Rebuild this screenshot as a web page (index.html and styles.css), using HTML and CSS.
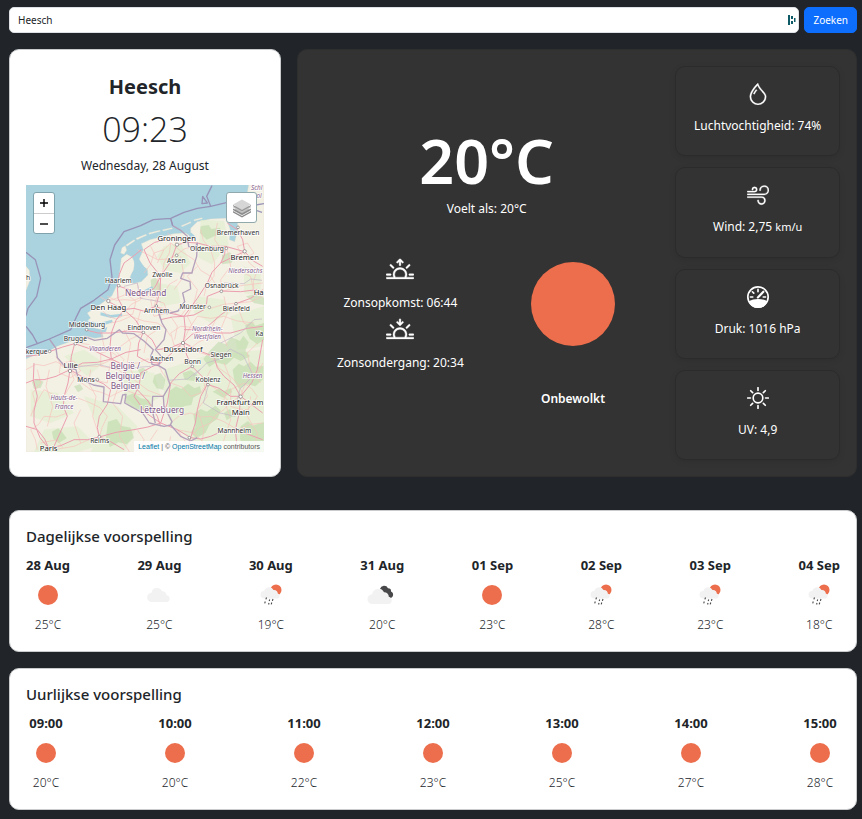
FILE: index.html
```html
<!DOCTYPE html>
<html lang="nl">
<head>
<meta charset="utf-8">
<meta name="viewport" content="width=device-width, initial-scale=1">
<title>Weer in Heesch</title>
<link rel="stylesheet" href="styles.css">
</head>
<body>
<svg class="sprite" aria-hidden="true">
  <symbol id="clear" viewBox="0 0 32 32"><circle cx="16" cy="16" r="10" fill="#ec6e4c"/></symbol>
  <symbol id="cloud" viewBox="0 0 32 32"><path fill="#f2f2f2" d="M9 23a4.600 4.600 0 0 1-.5-9.200A5.500 5.500 0 0 1 19 12.300a4 4 0 0 1 4.500 4A3.400 3.400 0 0 1 24 23z"/></symbol>
  <symbol id="rain" viewBox="0 0 32 32">
    <circle cx="21" cy="11" r="5.500" fill="#ec6e4c"/>
    <path fill="#f2f2f2" d="M9 19.500a3.700 3.700 0 0 1 .4-7.400A4.800 4.800 0 0 1 18.500 11a4 4 0 0 1 4.300 3.600A2.600 2.600 0 0 1 23 19.500z"/>
    <path stroke="#48484a" stroke-width="1.100" d="M11.500 18.500l-.6 1.800M10.300 22.500l-.6 1.800M14.700 20.500l-.5 1.500M14 24l-.4 1.500M18 20l-.6 1.800M16.800 23.500l-.6 1.800"/>
  </symbol>
  <symbol id="broken" viewBox="0 0 32 32">
    <path fill="#48484a" d="M14 10a4.300 4.300 0 0 1 8-.8 3 3 0 0 1 3 3.300 3.500 3.500 0 1 1-3.500 6z"/>
    <path fill="#f2f2f2" d="M6.500 25a4.900 4.900 0 0 1-.3-9.800A6.300 6.300 0 0 1 18 13.200a4.500 4.500 0 0 1 4.800 4.600A3.700 3.700 0 0 1 23 25z"/>
  </symbol>
</svg>

<main class="page">
  <form class="search">
    <div class="search-box">
      <input class="search-input" type="text" value="Heesch" aria-label="Plaats">
      <svg class="search-mark" viewBox="0 0 8 10" aria-hidden="true"><path fill="#0e5a66" d="M0 0h2v10H0zM3 1h2v3H3zM3 6h2v3H3zM6 3h1.500v4H6z"/></svg>
    </div>
    <button class="search-button" type="submit">Zoeken</button>
  </form>

  <div class="overview">
    <section class="card place">
      <h1 class="place-name">Heesch</h1>
      <p class="clock">09:23</p>
      <p class="date">Wednesday, 28 August</p>
      <div class="map">
        <svg class="map-canvas" viewBox="6 6 714 801" preserveAspectRatio="xMidYMid slice" role="img" aria-label="Kaart">
          <rect x="6" y="6" width="714" height="801" fill="#aad3df"/>
          <path class="land" d="M6 528L40 512 76 504 100 490 150 472 180 458 212 466 238 462 232 440 200 432 182 420 200 405 190 390 218 372 246 352 264 338 282 300 288 262 292 226 308 214 324 222 332 240 328 262 318 282 326 302 352 296 372 276 370 258 354 248 346 228 358 200 352 182 378 170 420 160 450 152 484 150 500 160 500 136 520 116 560 108 606 106 618 138 616 170 632 176 642 140 640 110 690 96 692 60 670 30 674 6H720V807H6z"/>
          <path class="land" d="M6 250L16 262 18 292 10 312 6 322zM290 210l4-16 10-6 4 14-8 12zM306 186l24-16 3 3-24 17zM336 166l30-12 2 3-29 13zM374 150l34-8 1 3-33 9zM416 140l28-6 1 3-28 7zM472 128l28-12 1 3-27 12zM510 110l24-6 1 3-24 7z"/>
          <path class="meadow" d="M420 190l50-10 30 60-30 30-50-10-20-40zM20 620l80 10 50 60-70 30-60-20zM520 340l80 10 20 40-60 30-50-30zM120 520l60-20 60 40-50 40zM660 250l50 20v70l-50-10zM530 110l70 4 14 70-50 60-40-20zM60 740l100-10 60 60-60 17H30zM180 640l100 30 60 60-40 77H200l30-60zM420 560l120-40 180-20v307H560l-120-80-20-90zM300 560l90 10 20 70-60 40-50-40zM400 300l60 10 10 50-60 10zM620 400l100-30v120l-80 10z"/>
          <path class="forest" d="M560 500l24-24 20 8 18-22 26 12 10-16 16 20-10 26 14 16-28 14-20-10-24 22-30-8-20 14-18-24zM436 624l20-14 16 8 20-16 20 14 16-6 4 20-24 14-6 22-22 4-14 18-20 6-12-24zM508 694l22-16 18 8 26-18 16 14-10 26-22 14-14 28-28 16-16-18 14-16zM306 640l24-10 20 16 24 4 16 26-14 12-30-8-24-6-18-16zM626 560l18-18 16 8 20-14 16 16 22-4v40l-24 22-26-6-22 14-14-22zM650 730l22-16 14 14 34-10v89h-60l-12-40zM252 716l26-8 14 20 28 6 10 30-22 20-24-6-26 14-12-30zM566 626l20-10 14 8 20-8 4 12-26 16zM530 130l24-4 8 12 26-4 6 20-24 6-22 10-20-20zM594 216l24-8 14 16-10 16-28 4zM392 576l18-6 14 20-6 30-20-4-12-20zM664 426l20-10 10 12 26-8v50l-20 14-22-16-10-20zM84 746l18-10 12 10 14 20-24 14-16-12zM24 596l16-8 18 8-8 18-20 4zM380 290l14-6 12 14 6 28-16 8-14-16zM666 340l30-6 24 10v22l-30-6zM476 570l24-8 20 14-10 18-28-4zM150 610l18-6 10 14-16 10zM600 690l18-12 8 22-18 12zM340 560l18-6 14 12-18 12z"/>
          <path class="water" d="M330 228l18 6 22 30-14 26-30 10-4-26 10-16zM186 412l40 8 38-10 2 8-36 12-40-2zM176 430l50 10 24-8-4 14-34 6zM230 388l30 8 34-4 1 7-34 6-32-8zM500 148l12 10-6 14-12-12zM360 322l24-12 4 6-22 14z"/>
          <g class="lane">
            <path d="M6 560L36 544 60 548 96 536 140 560 168 596 200 620 232 628 260 640 300 620 340 634 380 640M20 700L34 664 60 620 90 636 120 640 136 612 150 590 140 560 112 548 96 520M120 640L164 646 200 660 228 674 250 700 234 734 226 762 190 772 150 790 90 800M40 800L34 770 20 740 44 724 60 700 96 702 130 690M300 390L322 364 350 350 344 326 340 300M390 370L430 378 470 400 490 372 520 360 560 376 600 364 640 360 680 356 716 340M250 340L276 352 300 350 330 352 360 340 390 342 420 330 436 304 460 290M440 180L436 210 420 240 416 268 400 290 402 330 390 370M458 186L450 166 430 150M340 200L366 212 400 230 430 228 458 216 480 198 510 190 560 200 610 196M360 270L380 244 390 210 420 200 440 180M440 180L470 204 510 230 530 262 560 280 576 306 600 324 650 308 716 300M480 470L496 436 520 400 560 406 600 400 640 414 690 420M480 480L516 504 560 520 586 556 620 580 644 606 660 640M400 540L416 570 440 600 474 612 500 640 530 630 550 600 584 624 620 660M440 720L466 698 500 690 530 702 560 700 600 716 640 740 680 724 716 720M500 760L526 734 560 720 576 696 600 680 620 656 650 640 660 612 680 580 704 566 716 540M160 480L192 484 220 500 256 500 290 490 320 468 358 450M260 420L288 414 320 400 360 414 400 420 424 436 440 460M130 560L172 548 220 550 262 530 300 544 340 540 370 528 400 530M262 530L254 566 250 600 210 590M262 530L290 566 330 590 372 622 420 640M560 200L572 240 570 280 548 306 540 340M660 210L676 240 700 260 688 296 690 330M530 140L538 172 560 200"/>
            <path d="M226 340l20 12 20-2 20-8 20-8 30 20-4 18-6 22-28 4-22 10-22-8-18-16M440 450l30-20 24 2 26 8 20 30-18 8-22 18-28-4-22-6zM620 620l40-20 22 16 18 24-12 20-18 20-24-2-26-8zM230 510l40-10 30 30-20 30-24-6-26-4zM110 540l40-6 20 30-30 20-34-14zM50 780l50-10 16 24M460 740l50 10 30 30-40 20zM380 350l40 10 10 30-40 10zM640 190l30-10 20 30-30 20z"/>
            <path d="M40 560l10 40-24 30 10 40M76 560l-10 50 20 60-16 60M170 680l-20 40 20 60M200 560l-6 40 22 40-10 60 20 60M280 620l-14 40 30 40-10 60 30 46M340 740l20 30-10 36M400 740l-20 30 20 36M440 760l-10 46M300 440l20 40-10 60 20 40M230 440l10 50 40 30M350 380l-10 40 20 30M400 440l-30 20-10 50M440 400l20 30-8 40M510 360l-20 40 20 40 50 0 20-40M600 340l10 50-20 50 20 50M640 370l20 50 40 20M520 250l-30 30 30 40-10 40M610 200l10 50-30 40 4 34M640 260l40 20 10 50M580 120l-8 50 20 30M470 220l10 60-30 40M420 200l-20 40M380 190l20 40M560 560l-20 40 10 40-30 40 20 60-10 60M600 540l20 50-20 60 20 60-30 90M680 640l-10 60 30 50-10 56M700 480l-30 30 10 50 30 40"/>
          </g>
          <g class="road">
            <path d="M6 520L42 516 76 506 116 492 152 482 200 498 262 528 286 540 300 560 314 594 340 620 372 654 400 700 410 730M138 560L142 520 152 482M138 560L176 540 220 538 262 528M138 560L132 600 120 640 118 670 130 700 108 750 90 790M138 560L176 582 210 590 238 602 260 620 250 664 226 700 220 734 226 762 260 776 300 800M6 600L32 590 60 590 96 580 138 560M30 540L28 590 40 640 30 684 30 720 48 764 74 796 110 788 150 770 190 770 226 762M74 796L62 768 40 740 6 730M226 762L276 748 330 740 372 732 410 720M262 528L258 490 262 450 276 412 300 380 280 370 250 354M262 450L222 450 182 440M300 380L282 346 280 308 286 274 300 240 330 218 352 200M280 308L316 320 360 340 392 314 410 280 440 236 458 186 488 178 520 180 560 190 604 190 662 206M300 380L330 376 358 384 396 370 436 390 480 400 510 396 540 380 548 360 550 340 590 324 650 326 700 320M396 370L408 324 410 280M358 448L334 410 300 380M358 448L310 444 262 450M358 448L384 470 400 500 440 494 478 478M358 448L344 480 340 520 374 538 410 540 446 508 478 478M262 528L306 508 350 500M410 540L382 552 350 570 346 606 330 640 366 690 410 720M478 478L484 440 480 400 520 346 550 300 564 268 590 240 630 220 662 206M478 478L504 454 540 440 590 396 636 362 680 346 716 320M478 478L488 516 504 550 534 580 550 604 586 616 620 640 650 640M478 478L526 504 570 520 580 554 600 580 630 606 650 640 646 690 634 740 640 800M410 720L456 738 500 764 530 768 560 760 596 744 634 740M504 550L466 572 440 600 430 660 410 720M550 604L530 640 520 680 514 720 500 764M650 640L684 598 700 560 716 470M650 640L716 690M410 280L378 240 360 200 392 178 430 170M662 206L656 170 640 140 610 120M662 206L688 234 716 250M604 190L602 214 590 240M480 400L446 402 410 410 396 370M540 440L580 450 620 450 670 436 716 430M540 440L480 440M634 740L716 770M500 764L490 800"/>
          </g>
          <path class="border" d="M440 106L446 128 470 142 490 160 494 190 512 196 520 180 518 220 506 260 504 270 476 270 470 286 498 296 500 318 476 330 482 356 462 384 430 392 404 388 414 420 426 440 420 470 394 500 412 520 404 548 384 544 380 520 388 500 360 474 330 452 296 450 286 440 250 466 212 472 180 460M76 468L96 496 100 524 124 552 156 560 162 584 208 606 240 612 238 656 290 662 296 636 306 634 302 660 356 690 376 720 420 730 440 726 470 760 500 774 520 764M404 548L424 560 438 606 418 640 386 640 384 680 394 720M418 640L420 670 444 716 438 728"/>
          <path class="sea-border" d="M720 62L670 70 610 58 560 70 520 76 480 88 440 106 388 110 350 128 300 146 272 186 258 230 264 282 252 320 210 352 170 376 158 400 140 440 76 468 40 482 26 456 6 430M40 482L6 494M560 70l-12-30 16-32M534 62l2-22 14 20zM6 208L34 230 50 286 38 340 12 376 6 398M440 106L446 128M660 70l54 18"/>
          <path class="region" d="M508 580l40-40 40-12 30-30 40 20 30 60-40 40-10 40M430 592l60-4 40-30M590 480l60-30 40-40 24-2M600 300l60 2 20-14 34 4M300 310l40-10 10 46 60 10M160 552l60-8 60 14 100-8M552 610l-14 50 50 30 46 10"/>
          <g class="dots"><circle cx="459" cy="185" r="5"/><circle cx="458" cy="217" r="4"/><circle cx="607" cy="196" r="4"/><circle cx="662" cy="205" r="5"/><circle cx="284" cy="308" r="4"/><circle cx="253" cy="354" r="5"/><circle cx="397" cy="369" r="4"/><circle cx="556" cy="373" r="4"/><circle cx="636" cy="362" r="4"/><circle cx="592" cy="325" r="4"/><circle cx="358" cy="448" r="4"/><circle cx="188" cy="440" r="4"/><circle cx="154" cy="482" r="4"/><circle cx="138" cy="564" r="5"/><circle cx="220" cy="590" r="4"/><circle cx="477" cy="480" r="5"/><circle cx="505" cy="550" r="4"/><circle cx="552" cy="605" r="4"/><circle cx="650" cy="641" r="5"/><circle cx="226" cy="761" r="4"/><circle cx="496" cy="764" r="4"/><circle cx="77" cy="505" r="4"/><circle cx="642" cy="133" r="4"/></g>
          <g class="town">
            <text x="642" y="155">Bremerhaven</text><text x="549" y="203">Oldenburg</text><text x="457" y="239">Assen</text><text x="415" y="282">Zwolle</text><text x="283" y="300">Haarlem</text><text x="593" y="316">Osnabrück</text><text x="398" y="390">Arnhem</text><text x="506" y="379">Münster</text><text x="637" y="385">Bielefeld</text><text x="189" y="431">Middelburg</text><text x="360" y="440">Eindhoven</text><text x="154" y="474">Brugge</text><text x="38" y="514">kerque</text><text x="591" y="522">Siegen</text><text x="413" y="535">Aachen</text><text x="506" y="542">Bonn</text><text x="186" y="597">Mons</text><text x="552" y="597">Koblenz</text><text x="227" y="781">Reims</text><text x="631" y="750">Mannheim</text><text x="706" y="458">Ka</text><text x="12" y="292">h</text>
          </g>
          <g class="city">
            <text x="458" y="173">Groningen</text><text x="662" y="232">Bremen</text><text x="253" y="382">Den Haag</text><text x="477" y="507">Düsseldorf</text><text x="140" y="554">Lille</text><text x="648" y="667">Frankfurt am</text><text x="650" y="697">Main</text><text x="74" y="803">Paris</text><text x="704" y="336">Ha</text>
          </g>
          <g class="country">
            <text x="365" y="338">Nederland</text><text x="304" y="559">België /</text><text x="304" y="589">Belgique /</text><text x="304" y="619">Belgien</text><text x="414" y="691">Lëtzebuerg</text>
          </g>
          <g class="province">
            <text x="664" y="271">Niedersachs</text><text x="550" y="443">Nordrhein-</text><text x="550" y="467">Westfalen</text><text x="243" y="505">Vlaanderen</text><text x="120" y="652">Hauts-de-</text><text x="120" y="677">France</text><text x="686" y="585">Hessen</text><text x="698" y="22">Schl</text><text x="705" y="46">ol</text>
          </g>
        </svg>
        <div class="zoom-control">
          <button class="zoom-button" type="button" aria-label="Inzoomen"><svg viewBox="0 0 10 10"><path d="M1 5h8M5 1v8"/></svg></button>
          <button class="zoom-button" type="button" aria-label="Uitzoomen"><svg viewBox="0 0 10 10"><path d="M1 5h8"/></svg></button>
        </div>
        <button class="layers-button" type="button" aria-label="Kaartlagen">
          <svg viewBox="0 0 20 20"><path fill="#8a8a8a" d="M1 13l9 5 9-5v1.500l-9 5-9-5z"/><path fill="#b5b5b5" d="M1 12.500l9-5 9 5-9 5z"/><path fill="#858585" d="M1 10.500l9 5 9-5v1.300l-9 5-9-5z"/><path fill="#c5c5c5" d="M1 9.500l9-5 9 5-9 5z"/><path fill="#959595" d="M1 7l9 5 9-5v1.300l-9 5-9-5z"/><path fill="#d6d6d6" d="M1 6.500l9-5 9 5-9 5z"/></svg>
        </button>
        <p class="attribution"><a href="#leaflet">Leaflet</a> | © <a href="#osm">OpenStreetMap</a> contributors</p>
      </div>
    </section>

    <section class="card current">
      <div class="now">
        <div class="reading">
          <p class="temperature">20°C</p>
          <p>Voelt als: 20°C</p>
        </div>
        <div class="sun-times">
          <svg class="sun-icon" viewBox="0 0 16 16" aria-hidden="true"><path d="M7.646 1.146a.5.500 0 0 1 .708 0l1.500 1.500a.5.500 0 0 1-.708.708L8.500 2.707V4.500a.5.500 0 0 1-1 0V2.707l-.646.647a.5.500 0 1 1-.708-.708zM2.343 4.343a.5.500 0 0 1 .707 0l1.414 1.414a.5.500 0 0 1-.707.707L2.343 5.050a.5.500 0 0 1 0-.707m11.314 0a.5.500 0 0 1 0 .707l-1.414 1.414a.5.500 0 1 1-.707-.707l1.414-1.414a.5.500 0 0 1 .707 0M8 7a3 3 0 0 1 2.599 4.500H5.400A3 3 0 0 1 8 7m3.710 4.500a4 4 0 1 0-7.418 0H.499a.5.500 0 0 0 0 1h15a.5.500 0 0 0 0-1h-3.790zM0 10a.5.500 0 0 1 .5-.5h2a.5.500 0 0 1 0 1h-2A.5.500 0 0 1 0 10m13 0a.5.500 0 0 1 .5-.5h2a.5.500 0 0 1 0 1h-2a.5.500 0 0 1-.5-.5"/></svg>
          <p>Zonsopkomst: 06:44</p>
          <svg class="sun-icon" viewBox="0 0 16 16" aria-hidden="true"><path d="M7.646 4.854a.5.500 0 0 0 .708 0l1.500-1.500a.5.500 0 0 0-.708-.708l-.646.647V1.500a.5.500 0 0 0-1 0v1.793l-.646-.647a.5.500 0 1 0-.708.708zm-5.303-.51a.5.500 0 0 1 .707 0l1.414 1.413a.5.500 0 0 1-.707.707L2.343 5.050a.5.500 0 0 1 0-.707zm11.314 0a.5.500 0 0 1 0 .706l-1.414 1.414a.5.500 0 1 1-.707-.707l1.414-1.414a.5.500 0 0 1 .707 0zM8 7a3 3 0 0 1 2.599 4.500H5.400A3 3 0 0 1 8 7m3.710 4.500a4 4 0 1 0-7.418 0H.499a.5.500 0 0 0 0 1h15a.5.500 0 0 0 0-1h-3.790zM0 10a.5.500 0 0 1 .5-.5h2a.5.500 0 0 1 0 1h-2A.5.500 0 0 1 0 10m13 0a.5.500 0 0 1 .5-.5h2a.5.500 0 0 1 0 1h-2a.5.500 0 0 1-.5-.5"/></svg>
          <p>Zonsondergang: 20:34</p>
        </div>
        <div class="condition">
          <svg class="condition-icon" viewBox="0 0 86 86" aria-hidden="true"><circle cx="43" cy="43" r="42" fill="#ec6e4c"/></svg>
          <p class="condition-text">Onbewolkt</p>
        </div>
      </div>
      <div class="stats">
        <div class="stat">
          <svg class="stat-icon" viewBox="0 0 16 16" aria-hidden="true"><path fill-rule="evenodd" d="M7.210.8C7.690.295 8 0 8 0q.164.544.371 1.038c.812 1.946 2.073 3.350 3.197 4.600C12.878 7.096 14 8.345 14 10a6 6 0 0 1-12 0C2 6.668 5.580 2.517 7.210.8m.413 1.021A31 31 0 0 0 5.794 3.990c-.726.950-1.436 2.008-1.960 3.070C3.304 8.133 3 9.138 3 10a5 5 0 0 0 10 0c0-1.201-.796-2.157-2.181-3.700l-.030-.032C9.750 5.110 8.500 3.720 7.623 1.820z"/><path fill-rule="evenodd" d="M4.553 7.776c.820-1.641 1.717-2.753 2.093-3.130l.708.708c-.290.290-1.128 1.311-1.907 2.870z"/></svg>
          <p>Luchtvochtigheid: 74%</p>
        </div>
        <div class="stat">
          <svg class="stat-icon" viewBox="0 0 16 16" aria-hidden="true"><path d="M12.500 2A2.500 2.500 0 0 0 10 4.500a.5.500 0 0 1-1 0A3.500 3.500 0 1 1 12.500 8H.5a.5.500 0 0 1 0-1h12a2.500 2.500 0 0 0 0-5m-7 1a1 1 0 0 0-1 1 .5.500 0 0 1-1 0 2 2 0 1 1 2 2h-5a.5.500 0 0 1 0-1h5a1 1 0 0 0 0-2M0 9.500A.5.500 0 0 1 .5 9h10.042a3 3 0 1 1-3 3 .5.500 0 0 1 1 0 2 2 0 1 0 2-2H.5a.5.500 0 0 1-.5-.5"/></svg>
          <p>Wind: 2,75 <small>km/u</small></p>
        </div>
        <div class="stat">
          <svg class="stat-icon line-icon" viewBox="0 0 16 16" aria-hidden="true"><circle cx="8" cy="8" r="7.400"/><path class="solid" d="M1 11q7-3.200 14 0-2 5-7 5t-7-5z"/><path d="M8 2.500v1.700M3.900 4.200l1 1M2.500 8h1.700M11.800 8h1.700"/><path class="needle" d="M7.900 8.300l4-4.100"/></svg>
          <p>Druk: 1016 hPa</p>
        </div>
        <div class="stat">
          <svg class="stat-icon line-icon" viewBox="0 0 16 16" aria-hidden="true"><circle cx="8" cy="8" r="3.500"/><path d="M8 .5v2M8 13.500v2M.5 8h2M13.500 8h2M2.700 2.700l1.400 1.400M11.900 11.900l1.400 1.400M2.700 13.300l1.400-1.400M11.900 4.100l1.400-1.400"/></svg>
          <p>UV: 4,9</p>
        </div>
      </div>
    </section>
  </div>

  <section class="card forecast">
    <h2 class="forecast-title">Dagelijkse voorspelling</h2>
    <ul class="forecast-list">
      <li><strong>28 Aug</strong><svg class="weather"><use href="#clear"/></svg><span>25°C</span></li>
      <li><strong>29 Aug</strong><svg class="weather"><use href="#cloud"/></svg><span>25°C</span></li>
      <li><strong>30 Aug</strong><svg class="weather"><use href="#rain"/></svg><span>19°C</span></li>
      <li><strong>31 Aug</strong><svg class="weather"><use href="#broken"/></svg><span>20°C</span></li>
      <li><strong>01 Sep</strong><svg class="weather"><use href="#clear"/></svg><span>23°C</span></li>
      <li><strong>02 Sep</strong><svg class="weather"><use href="#rain"/></svg><span>28°C</span></li>
      <li><strong>03 Sep</strong><svg class="weather"><use href="#rain"/></svg><span>23°C</span></li>
      <li><strong>04 Sep</strong><svg class="weather"><use href="#rain"/></svg><span>18°C</span></li>
    </ul>
  </section>

  <section class="card forecast">
    <h2 class="forecast-title">Uurlijkse voorspelling</h2>
    <ul class="forecast-list">
      <li><strong>09:00</strong><svg class="weather"><use href="#clear"/></svg><span>20°C</span></li>
      <li><strong>10:00</strong><svg class="weather"><use href="#clear"/></svg><span>20°C</span></li>
      <li><strong>11:00</strong><svg class="weather"><use href="#clear"/></svg><span>22°C</span></li>
      <li><strong>12:00</strong><svg class="weather"><use href="#clear"/></svg><span>23°C</span></li>
      <li><strong>13:00</strong><svg class="weather"><use href="#clear"/></svg><span>25°C</span></li>
      <li><strong>14:00</strong><svg class="weather"><use href="#clear"/></svg><span>27°C</span></li>
      <li><strong>15:00</strong><svg class="weather"><use href="#clear"/></svg><span>28°C</span></li>
    </ul>
  </section>
</main>
</body>
</html>
```
FILE: styles.css
```css
* {
  box-sizing: border-box;
}

body {
  margin: 0;
  background: #212529;
  color: #212529;
  font: 12px/20px "Noto Sans", "Open Sans", sans-serif;
}

h1,
h2,
p,
ul {
  margin: 0;
  padding: 0;
}

button,
input {
  font: inherit;
}

.sprite {
  position: absolute;
  width: 0;
  height: 0;
}

.page {
  display: flex;
  flex-direction: column;
  gap: 16px;
  padding: 7px 5px 9px 9px;
}

.search {
  display: flex;
  gap: 5px;
}

.search-box {
  position: relative;
  flex: 1;
}

.search-input {
  display: block;
  width: 100%;
  height: 26px;
  padding: 0 8px;
  border: 1px solid #dee2e6;
  border-radius: 5px;
  background: #fff;
  color: #212529;
  font-size: 10px;
}

.search-mark {
  position: absolute;
  right: 3px;
  top: 8px;
  width: 8px;
  height: 10px;
}

.search-button {
  height: 26px;
  padding: 0 8px;
  border: 1px solid #0d6efd;
  border-radius: 5px;
  background: #0d6efd;
  color: #fff;
  font-size: 10px;
}

.card {
  padding: 16px;
  border: 1px solid #c9cbcd;
  border-radius: 10px;
  background: #fff;
}

.overview {
  display: grid;
  grid-template-columns: repeat(12, 1fr);
  gap: 16px;
  margin-bottom: 17px;
}

.place {
  grid-column: span 4;
  display: flex;
  flex-direction: column;
  align-items: center;
  padding-bottom: 24px;
  text-align: center;
}

.place-name {
  padding-top: 6px;
  font-size: 20px;
  line-height: 30px;
}

.clock {
  font-family: "Open Sans", sans-serif;
  font-size: 34px;
  font-weight: 300;
  line-height: 54px;
}

.date {
  margin-bottom: 9px;
}

.map {
  position: relative;
  align-self: stretch;
  height: 267px;
  overflow: hidden;
}

.map-canvas {
  display: block;
  width: 100%;
  height: 100%;
}

.land {
  fill: #f3f0e4;
  stroke: #e8e2cf;
}

.forest {
  fill: #b9d8a8;
  opacity: 0.55;
}

.meadow {
  fill: #e0eecd;
  opacity: 0.6;
}

.water {
  fill: #aad3df;
}

.road,
.lane,
.border,
.sea-border,
.region {
  fill: none;
  stroke-linejoin: round;
}

.road {
  stroke: #ec9fb0;
  stroke-width: 3;
}

.lane {
  stroke: #f7c3bd;
  stroke-width: 2;
}

.border {
  stroke: #b3a0bb;
  stroke-width: 4;
}

.sea-border {
  stroke: #9893b8;
  stroke-width: 4;
}

.region {
  stroke: #c4b6c9;
  stroke-width: 2;
}

.dots {
  fill: #fff;
  stroke: #777;
  stroke-width: 2;
}

.map-canvas text {
  font-family: "Noto Sans", sans-serif;
  text-anchor: middle;
  paint-order: stroke;
  stroke: #fffc;
  stroke-width: 5;
}

.town {
  fill: #333;
  font-size: 20px;
}

.city {
  fill: #222;
  font-size: 23px;
}

.country {
  fill: #7d5485;
  font-size: 25px;
}

.province {
  fill: #85608f;
  font-size: 19px;
  font-style: italic;
}

.zoom-control {
  position: absolute;
  top: 7px;
  left: 7px;
  display: flex;
  flex-direction: column;
  border: 1px solid #7fa3ad;
  border-radius: 3px;
  background: #fff;
}

.zoom-button {
  display: grid;
  place-items: center;
  width: 20px;
  height: 20px;
  padding: 0;
  border: 0;
  background: none;
}

.zoom-button + .zoom-button {
  border-top: 1px solid #ccc;
}

.zoom-button svg {
  width: 10px;
  height: 10px;
  stroke: #000;
  stroke-width: 1.4;
}

.layers-button {
  position: absolute;
  top: 7px;
  right: 7px;
  display: grid;
  place-items: center;
  width: 31px;
  height: 31px;
  padding: 0;
  border: 1px solid #8fa9ac;
  border-radius: 3px;
  background: #fff;
}

.layers-button svg {
  width: 20px;
  height: 20px;
}

.attribution {
  position: absolute;
  right: 0;
  bottom: 0;
  padding: 0 4px;
  background: #fffc;
  color: #555;
  font: 7px/11px "Liberation Sans", sans-serif;
}

.attribution a {
  color: #0078a8;
  text-decoration: none;
}

.current {
  grid-column: span 8;
  display: grid;
  grid-template-columns: repeat(3, 1fr);
  gap: 16px;
  border-color: #2e2e2e;
  background: #333;
  color: #fff;
  text-align: center;
}

.now {
  grid-column: span 2;
  display: grid;
  grid-template-columns: 1fr 1fr;
  align-content: center;
  row-gap: 32px;
  padding-top: 6px;
}

.reading {
  grid-column: span 2;
}

.temperature {
  font-size: 61px;
  font-weight: 600;
  line-height: 76px;
}

.sun-times {
  padding-top: 6px;
}

.sun-icon,
.stat-icon {
  display: block;
  fill: currentColor;
  stroke: currentColor;
  stroke-width: 0.2;
}

.sun-icon {
  width: 28px;
  height: 28px;
  margin: 0 auto 8px;
}

.sun-times p {
  margin-bottom: 4px;
}

.condition-icon {
  display: block;
  width: 86px;
  height: 86px;
  margin: 10px auto 42px;
}

.condition-text {
  font-weight: 600;
}

.stats {
  display: flex;
  flex-direction: column;
  gap: 11px;
}

.stat {
  flex: 1;
  padding: 16px 8px;
  border: 1px solid #2b2b2b;
  border-radius: 10px;
  box-shadow: 0 2px 6px #00000018;
}

.stat-icon {
  width: 22px;
  height: 22px;
  margin: 0 auto 11px;
}

.line-icon {
  fill: none;
  stroke-width: 1.2;
  stroke-linecap: round;
}

.line-icon .solid {
  fill: currentColor;
  stroke: none;
}

.line-icon .needle {
  stroke-width: 1.6;
}

.stat small {
  font-size: 11px;
}

.forecast-title {
  margin-bottom: 10px;
  font-size: 15px;
  font-weight: 500;
  line-height: 18px;
}

.forecast-list {
  display: flex;
  justify-content: space-between;
  list-style: none;
}

.forecast-list li {
  display: flex;
  flex-direction: column;
  align-items: center;
  min-width: 40px;
}

.forecast-list strong {
  font-size: 13px;
}

.weather {
  width: 32px;
  height: 32px;
  margin: 4px 0;
}

.forecast-list span {
  font-weight: 300;
}
```
